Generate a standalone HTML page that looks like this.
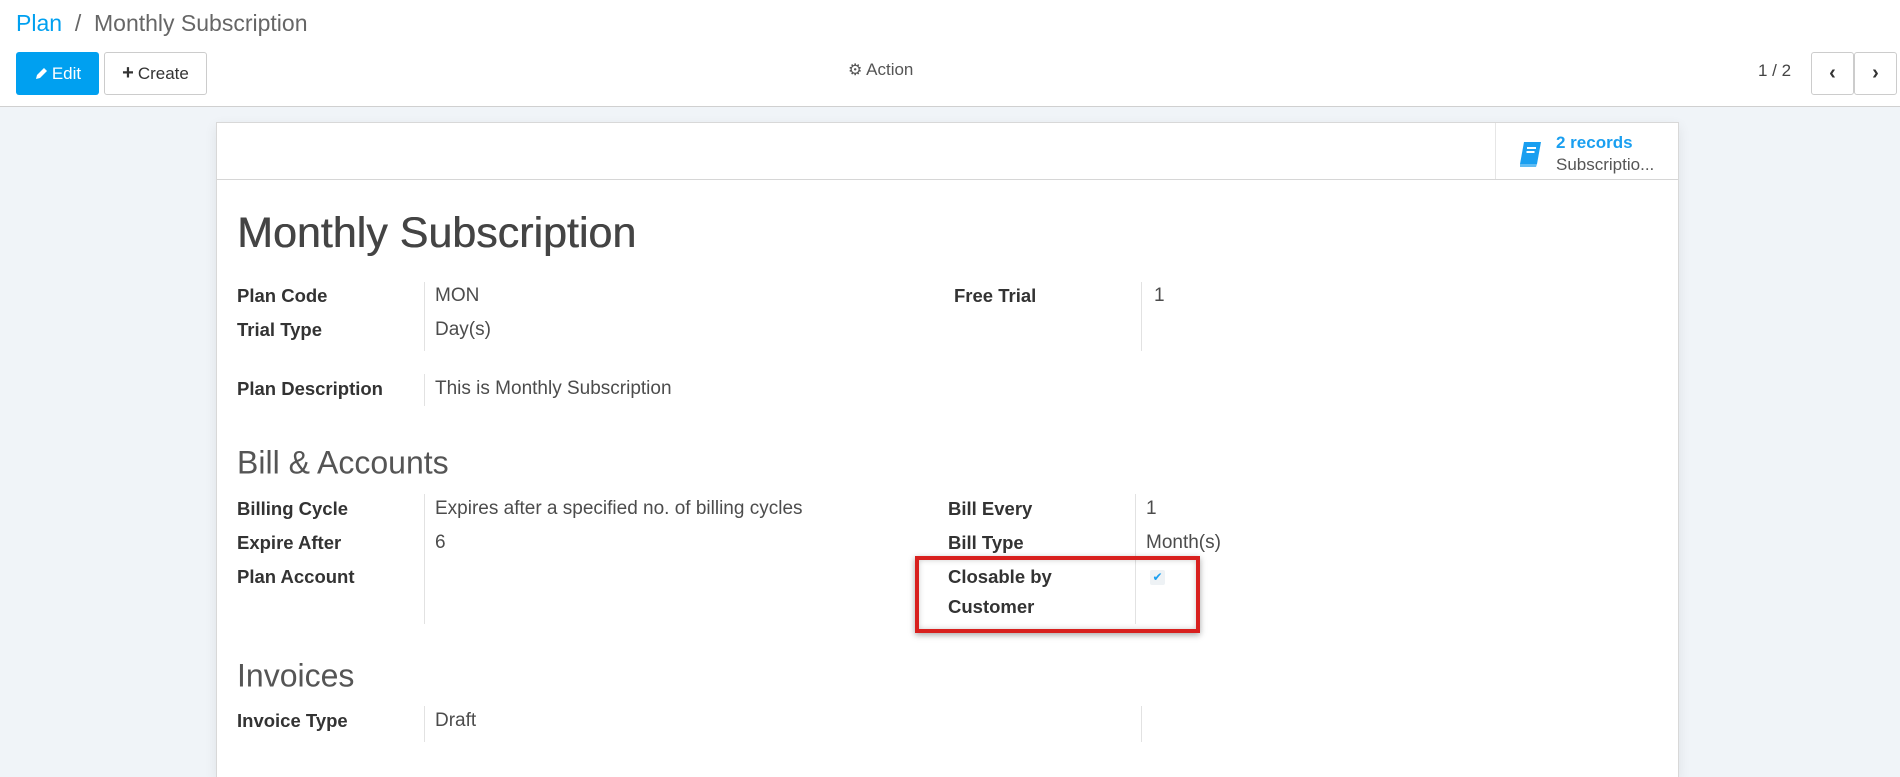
<!DOCTYPE html>
<html style="width:1900px;height:777px;overflow:hidden"><head><meta charset="utf-8"><style>
*{margin:0;padding:0;box-sizing:border-box}
body{width:1900px;height:777px;overflow:hidden;background:#f0f4f8;font-family:"Liberation Sans",sans-serif;color:#4c4c4c;position:relative}
.a{position:absolute;white-space:nowrap}
#top{position:absolute;left:0;top:0;width:1900px;height:107px;background:#fff;border-bottom:1px solid #d0d0d0}
.btn{position:absolute;top:52px;height:43px;border-radius:3px;font-size:17px;display:flex;align-items:center;justify-content:center}
#sheet{position:absolute;left:216px;top:122px;width:1463px;height:655px;background:#fff;border:1px solid #d8d8d8;border-bottom:none;box-shadow:0 4px 12px rgba(0,0,0,.08)}
.lb{position:absolute;font-size:18.5px;font-weight:bold;color:#333;transform:translateY(-50%);white-space:nowrap}
.v{position:absolute;font-size:19px;color:#4c4c4c;transform:translateY(-50%);white-space:nowrap}
.vl{position:absolute;width:1px;background:#e2e2e2}
h2{position:absolute;font-size:32px;font-weight:normal;color:#555;transform:translateY(-50%);white-space:nowrap}
</style></head><body>
<div id="top">
<div class="a" style="left:16px;top:10px;font-size:23px;color:#666"><span style="color:#00a0f0">Plan</span> &nbsp;/ &nbsp;Monthly Subscription</div>
<div class="btn" style="left:16px;width:83px;background:#00a0f0;color:#fff">
<svg width="14" height="14" viewBox="0 0 14 14" style="margin-right:4px"><path d="M2 12l1-4 7-7 3 3-7 7z" fill="#fff"/></svg>Edit</div>
<div class="btn" style="left:104px;width:103px;border:1px solid #ccc;color:#333"><span style="font-weight:bold;font-size:20px;margin-right:4px">+</span>Create</div>
<div class="a" style="left:848px;top:60px;font-size:17px;color:#555"><span style="font-size:16px">⚙</span> Action</div>
<div class="a" style="left:1758px;top:61px;font-size:17px;color:#444">1 / 2</div>
<div class="btn" style="left:1811px;width:43px;border:1px solid #ccc;font-weight:bold;color:#333;font-size:20px">‹</div>
<div class="btn" style="left:1854px;width:43px;border:1px solid #ccc;font-weight:bold;color:#333;font-size:20px">›</div>
</div>
<div id="sheet">
<div class="a" style="left:0;top:56px;width:1461px;height:1px;background:#d6d6d6"></div>
<div class="a" style="left:1278px;top:0;width:1px;height:56px;background:#e6e6e6"></div>
<svg class="a" style="left:1302px;top:17px" width="24" height="28" viewBox="0 0 24 28"><path d="M5 2h17l-4 22H1z" fill="#1a9ff0"/><path d="M1 24h17l-1 3H1z" fill="#1a9ff0" opacity=".7"/><rect x="8" y="7" width="9" height="2" fill="#fff"/><rect x="7.5" y="11" width="8" height="2" fill="#fff"/></svg>
<div class="a" style="left:1339px;top:10px;font-size:17px;font-weight:bold;color:#1a9ff0">2 records</div>
<div class="a" style="left:1339px;top:32px;font-size:17px;color:#555">Subscriptio...</div>
<div class="a" style="left:20px;top:86px;font-size:43px;color:#444;text-shadow:0.5px 0 0 #444">Monthly Subscription</div>
</div>
<div class="vl" style="left:424px;top:282px;height:69px"></div>
<div class="vl" style="left:1141px;top:282px;height:69px"></div>
<div class="lb" style="left:237px;top:296px">Plan Code</div><div class="v" style="left:435px;top:296px">MON</div>
<div class="lb" style="left:237px;top:330px">Trial Type</div><div class="v" style="left:435px;top:330px">Day(s)</div>
<div class="lb" style="left:954px;top:296px">Free Trial</div><div class="v" style="left:1154px;top:296px">1</div>
<div class="vl" style="left:424px;top:374px;height:32px"></div>
<div class="lb" style="left:237px;top:389px">Plan Description</div><div class="v" style="left:435px;top:389px">This is Monthly Subscription</div>
<h2 style="left:237px;top:463px">Bill &amp; Accounts</h2>
<div class="vl" style="left:424px;top:494px;height:130px"></div>
<div class="vl" style="left:1135px;top:494px;height:130px"></div>
<div class="lb" style="left:237px;top:509px">Billing Cycle</div><div class="v" style="left:435px;top:509px">Expires after a specified no. of billing cycles</div>
<div class="lb" style="left:237px;top:543px">Expire After</div><div class="v" style="left:435px;top:543px">6</div>
<div class="lb" style="left:237px;top:577px">Plan Account</div>
<div class="lb" style="left:948px;top:509px">Bill Every</div><div class="v" style="left:1146px;top:509px">1</div>
<div class="lb" style="left:948px;top:543px">Bill Type</div><div class="v" style="left:1146px;top:543px">Month(s)</div>
<div class="lb" style="left:948px;top:577px">Closable by</div>
<div class="lb" style="left:948px;top:607px">Customer</div>
<div class="a" style="left:1150px;top:570px;width:15px;height:15px;background:#eef2f5;border-radius:2px;color:#1a9ff0;font-size:12px;text-align:center;line-height:15px">✔</div>
<div class="a" style="left:915px;top:556px;width:285px;height:77px;border:4px solid #d8201e;box-shadow:0 2px 6px rgba(0,0,0,.35),inset 0 0 6px rgba(0,0,0,.2)"></div>
<h2 style="left:237px;top:676px">Invoices</h2>
<div class="vl" style="left:424px;top:706px;height:36px"></div>
<div class="vl" style="left:1141px;top:706px;height:36px"></div>
<div class="lb" style="left:237px;top:721px">Invoice Type</div><div class="v" style="left:435px;top:721px">Draft</div>
</body></html>
